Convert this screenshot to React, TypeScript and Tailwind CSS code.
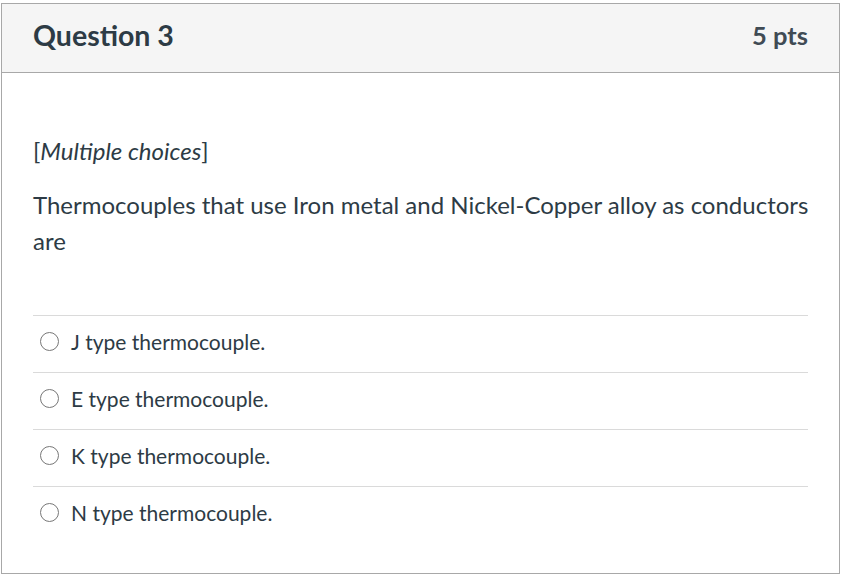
const answers = [
  "J type thermocouple.",
  "E type thermocouple.",
  "K type thermocouple.",
  "N type thermocouple.",
];

export default function App() {
  return (
    <div className="h-[577px] w-[843px] bg-white pl-px pt-[3px] font-['Lato',sans-serif] text-[#2d3b45]">
      <div className="flex h-[571px] w-[839px] flex-col border border-[#a8a8a8]">
        <div className="flex h-[69px] items-center justify-between border-b border-[#a8a8a8] bg-[#f5f5f5] px-[31px] pb-[5px]">
          <h2 className="text-[28.5px] font-bold leading-none">Question 3</h2>
          <span className="text-[25.5px] font-bold leading-none text-[#404b54]">5 pts</span>
        </div>

        <div className="px-[31px] pt-[60px]">
          <p className="text-[24px] leading-[36px]">
            [<em>Multiple choices</em>]
          </p>
          <p className="-mr-[6px] mt-[18px] text-[24px] leading-[36px]">
            Thermocouples that use Iron metal and Nickel-Copper alloy as conductors are
          </p>

          <div className="mt-[56px]">
            {answers.map((answer) => (
              <label
                key={answer}
                className="flex h-[57px] items-center gap-[12px] border-t border-[#dadada] pb-[5px] pl-[7px]"
              >
                <span className="h-[19px] w-[19px] rounded-full border-[1.5px] border-[#777]" />
                <span className="text-[21px]">{answer}</span>
              </label>
            ))}
          </div>
        </div>
      </div>
    </div>
  );
}
